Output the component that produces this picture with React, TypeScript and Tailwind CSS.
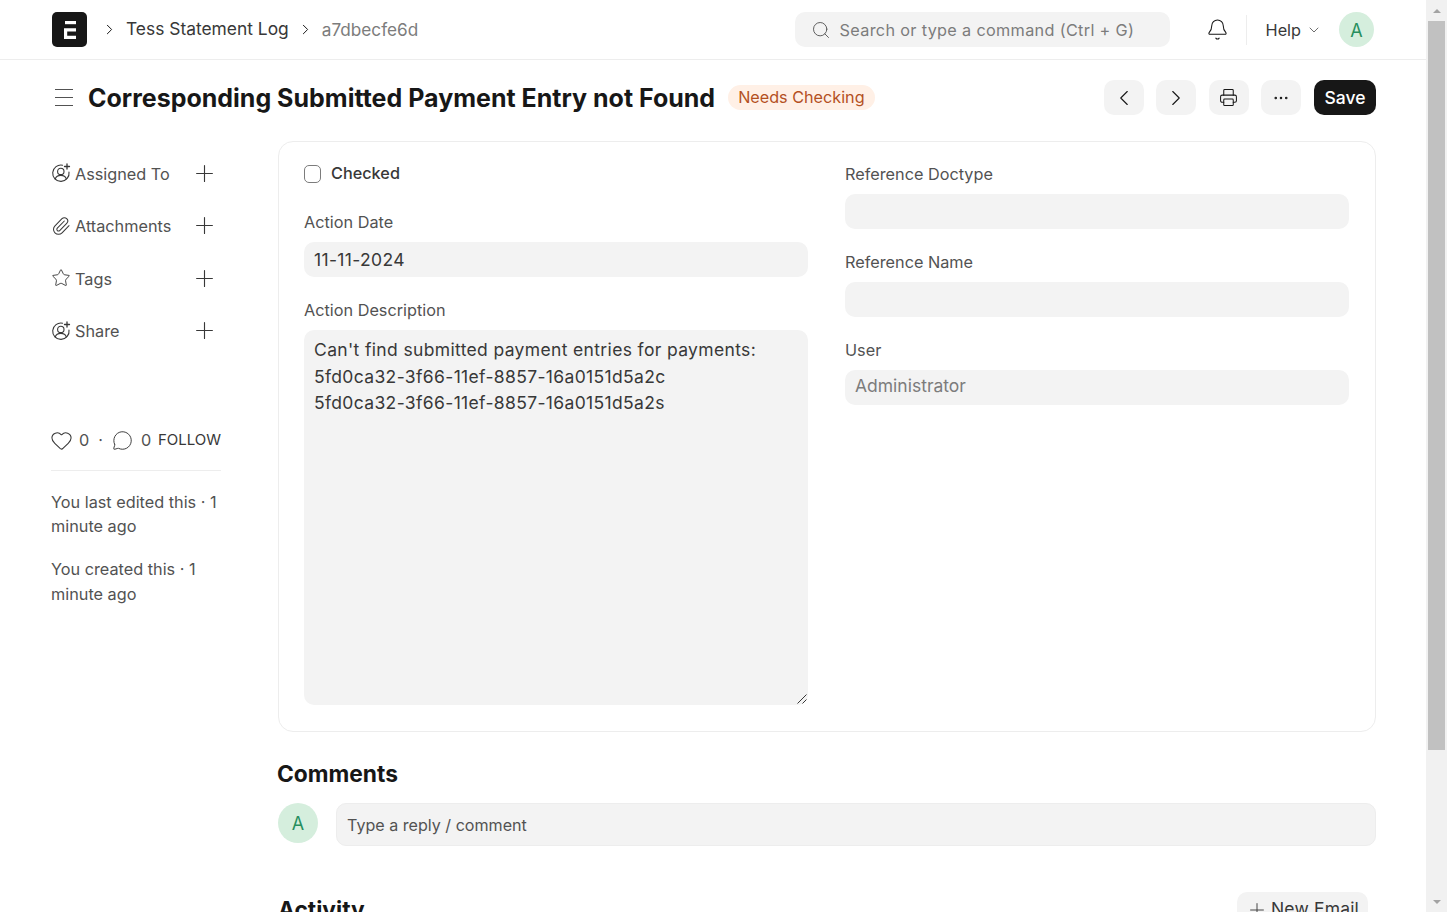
import { Bell, ChevronDown, ChevronLeft, ChevronRight, Ellipsis, Heart, MessageCircle, Paperclip, Plus, Printer, Search, Star } from 'lucide-react';
import type { ReactNode } from 'react';

function UserPlusIcon() {
  return (
    <svg width="20" height="20" viewBox="0 0 20 20" fill="none" stroke="#383838" strokeWidth="1.100" strokeLinecap="round">
      <path d="M11.600 2.200A8.200 8.200 0 1 0 18 9" />
      <circle cx="9.800" cy="8.400" r="3.200" />
      <path d="M4.200 16c.8-2.400 3-3.600 5.600-3.600s4.800 1.200 5.600 3.600" />
      <path d="M16 1v5M13.500 3.500h5" strokeWidth="1.300" />
    </svg>
  );
}

function Logo() {
  return (
    <div className="flex h-[35px] w-[35px] items-center justify-center rounded-[5px] bg-[#171717]">
      <svg width="12" height="18" viewBox="0 0 12 18" fill="#fff">
        <rect x="1" y="0" width="11" height="3.200" />
        <path d="M0 7.300h12v3.200H3.200v4.200H12V18H0z" />
      </svg>
    </div>
  );
}

function Field({ label, children }: { label: string; children: ReactNode }) {
  return (
    <div>
      <div className="mb-[7px] h-[25px] text-[16.25px] leading-[25px] text-[#525252]">{label}</div>
      {children}
    </div>
  );
}

function TextBox({ value, muted }: { value?: string; muted?: boolean }) {
  return (
    <div className={`h-[35px] rounded-[10px] bg-[#f3f3f3] px-[10px] text-[17.5px] ${muted ? 'leading-[32px] text-[#7c7c7c]' : 'leading-[35px] tracking-[0.02em] text-[#383838]'}`}>
      {value}
    </div>
  );
}

function IconButton({ children }: { children: ReactNode }) {
  return <button className="flex h-[35px] w-[40px] items-center justify-center rounded-[10px] bg-[#f3f3f3] text-[#171717]">{children}</button>;
}

const sidebarItems = [
  { label: 'Assigned To', icon: <UserPlusIcon /> },
  { label: 'Attachments', icon: <Paperclip size={20} strokeWidth={1.250} color="#383838" /> },
  { label: 'Tags', icon: <Star size={20} strokeWidth={1.100} color="#383838" /> },
  { label: 'Share', icon: <UserPlusIcon /> },
];

function Scrollbar() {
  return (
    <div className="flex h-full w-[21px] shrink-0 flex-col items-center bg-[#f1f1f1]">
      <div className="flex h-[21px] items-center justify-center">
        <div className="h-0 w-0 border-x-[4px] border-b-[4px] border-x-transparent border-b-[#a3a3a3]" />
      </div>
      <div className="h-[729px] w-[17px] bg-[#c1c1c1]" />
      <div className="flex-1" />
      <div className="flex h-[21px] items-center justify-center">
        <div className="h-0 w-0 border-x-[4px] border-t-[4px] border-x-transparent border-t-[#a3a3a3]" />
      </div>
    </div>
  );
}

export default function App() {
  return (
    <div className="flex h-[912px] overflow-hidden bg-white font-['Inter',sans-serif] text-[#171717]">
      <div className="min-w-0 flex-1">
        <header className="flex h-[60px] items-center border-b border-[#ededed] pl-[52px] pr-[52px]">
          <Logo />
          <ChevronRight size={17} strokeWidth={1.400} color="#171717" className="ml-[14px]" />
          <span className="ml-[8px] text-[17.4px] text-[#383838]">Tess Statement Log</span>
          <ChevronRight size={17} strokeWidth={1.400} color="#171717" className="ml-[8px]" />
          <span className="ml-[8px] text-[17.2px] text-[#7c7c7c]">a7dbecfe6d</span>
          <div className="ml-auto flex h-[35px] w-[375px] items-center rounded-[10px] bg-[#f3f3f3] pl-[16px]">
            <Search size={20} strokeWidth={1.100} color="#525252" />
            <span className="ml-[9px] pt-px text-[16.25px] tracking-[0.32px] text-[#7c7c7c]">Search or type a command (Ctrl + G)</span>
          </div>
          <Bell size={23} strokeWidth={1.100} color="#171717" className="ml-[36px]" />
          <div className="ml-[17px] h-[30px] w-px bg-[#ededed]" />
          <span className="ml-[19px] pt-px text-[16.25px] text-[#383838]">Help</span>
          <ChevronDown size={16} strokeWidth={1.100} color="#383838" className="ml-[5px] mt-px" />
          <div className="ml-[17px] flex h-[35px] w-[35px] items-center justify-center rounded-full bg-[#d5eedd] pt-px text-[18px] text-[#278f5e]">A</div>
        </header>

        <div className="flex h-[81px] items-start pl-[55px] pr-[50px] pt-[20px]">
          <div className="flex h-[35px] w-[33px] flex-col justify-center gap-[6.6px]">
            <div className="h-px w-[18px] bg-[#525252]" />
            <div className="h-px w-[18px] bg-[#525252]" />
            <div className="h-px w-[18px] bg-[#525252]" />
          </div>
          <h1 className="pt-px text-[25px] font-bold leading-[35px] text-[#171717]">Corresponding Submitted Payment Entry not Found</h1>
          <span className="ml-[13px] mt-[5px] flex h-[25px] items-center rounded-full bg-[#fff0e6] px-[10px] text-[16.2px] text-[#b4501f]">Needs Checking</span>
          <div className="ml-auto flex gap-[12.6px]">
            <IconButton><ChevronLeft size={26} strokeWidth={1} /></IconButton>
            <IconButton><ChevronRight size={26} strokeWidth={1} /></IconButton>
            <IconButton><Printer size={19} strokeWidth={1.300} /></IconButton>
            <IconButton><Ellipsis size={18} strokeWidth={1.400} /></IconButton>
            <button className="flex h-[35px] w-[62px] items-center justify-center rounded-[10px] bg-[#171717] pt-px text-[17.5px] font-medium text-white">Save</button>
          </div>
        </div>

        <div className="flex pl-[51px] pr-[50px]">
          <aside className="w-[227px] shrink-0">
            <div className="w-[170px] pt-[19px]">
              {sidebarItems.map((item) => (
                <div key={item.label} className="flex h-[26px] items-center [&:not(:first-child)]:mt-[26.500px]">
                  <div className="flex w-[24px] shrink-0 items-center">{item.icon}</div>
                  <span className="pt-[2px] text-[16.25px] text-[#525252]">{item.label}</span>
                  <Plus size={27} strokeWidth={1} color="#383838" className="ml-auto mr-[3px]" />
                </div>
              ))}
              <div className="mt-[85px] flex h-[24px] items-center text-[16.25px] text-[#525252]">
                <Heart size={23} strokeWidth={1.100} color="#383838" className="-ml-px" />
                <span className="ml-[6px]">0</span>
                <span className="ml-[9px]">·</span>
                <MessageCircle size={21} strokeWidth={1.100} color="#383838" className="ml-[9px]" />
                <span className="ml-[8px]">0</span>
                <span className="ml-auto text-[15px] text-[#383838]">FOLLOW</span>
              </div>
              <div className="mt-[17px] h-px bg-[#ededed]" />
              <p className="mt-[19px] text-[16.25px] leading-[24.5px] text-[#525252]">You last edited this · 1 minute ago</p>
              <p className="mt-[18px] text-[16.25px] leading-[25px] text-[#525252]">You created this · 1 minute ago</p>
            </div>
          </aside>

          <main className="min-w-0 flex-1">
            <div className="grid h-[591px] grid-cols-2 gap-x-[37px] rounded-[15px] border border-[#ededed] pl-[25px] pr-[26px] pt-[19px]">
              <div>
                <div className="flex h-[25px] items-center">
                  <div className="h-[18px] w-[17px] rounded-[5px] border border-[#7c7c7c] bg-white" />
                  <span className="ml-[10px] text-[16.25px] font-medium text-[#383838]">Checked</span>
                </div>
                <div className="mt-[24px]">
                  <Field label="Action Date"><TextBox value="11-11-2024" /></Field>
                </div>
                <div className="mt-[21px]">
                  <Field label="Action Description">
                    <div className="relative h-[375px] rounded-[10px] bg-[#f3f3f3] px-[10px] py-[7px] text-[17.5px] leading-[26.5px] tracking-[0.02em] text-[#383838]">
                      <div>Can't find submitted payment entries for payments:</div>
                      <div>5fd0ca32-3f66-11ef-8857-16a0151d5a2c</div>
                      <div>5fd0ca32-3f66-11ef-8857-16a0151d5a2s</div>
                      <svg className="absolute bottom-0 right-0" width="12" height="12" viewBox="0 0 12 12" stroke="#383838" strokeWidth="1">
                        <path d="M1.500 10.500 10.500 1.500M6.500 10.500l4-4" />
                      </svg>
                    </div>
                  </Field>
                </div>
              </div>
              <div className="pt-[1px]">
                <Field label="Reference Doctype"><TextBox /></Field>
                <div className="mt-[21px]">
                  <Field label="Reference Name"><TextBox /></Field>
                </div>
                <div className="mt-[21px]">
                  <Field label="User"><TextBox value="Administrator" muted /></Field>
                </div>
              </div>
            </div>

            <h2 className="-ml-px mt-[27px] text-[22.75px] font-bold leading-[30px] text-[#171717]">Comments</h2>
            <div className="mt-[14px] flex">
              <div className="flex h-[40px] w-[40px] shrink-0 items-center justify-center rounded-full bg-[#d5eedd] text-[18px] text-[#278f5e]">A</div>
              <div className="ml-[18px] flex h-[43px] flex-1 items-center rounded-[10px] border border-[#ededed] bg-[#f3f3f3] px-[10px] pt-[2px] text-[16.1px] text-[#525252]">Type a reply / comment</div>
            </div>

            <div className="mt-[46px] flex items-start justify-between pr-[8px]">
              <h2 className="mt-[3px] text-[22.75px] font-bold leading-[30px] text-[#171717]">Activity</h2>
              <button className="flex h-[35px] w-[131px] items-center justify-center rounded-[10px] bg-[#f3f3f3] text-[17.5px] tracking-[0.01em] text-[#383838]">
                <Plus size={22} strokeWidth={1} className="mr-[3px]" />
                New Email
              </button>
            </div>
          </main>
        </div>
      </div>
      <Scrollbar />
    </div>
  );
}
